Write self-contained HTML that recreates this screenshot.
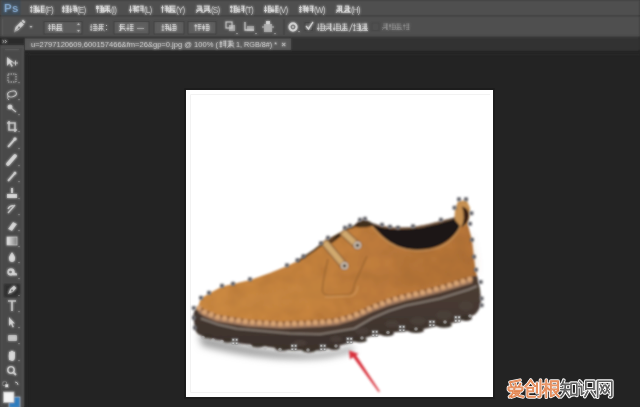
<!DOCTYPE html>
<html><head><meta charset="utf-8">
<style>
*{margin:0;padding:0}
html,body{width:640px;height:407px;overflow:hidden;background:#232323}
svg{position:absolute;left:0;top:0;display:block}
text{font-family:"Liberation Sans",sans-serif}
</style></head><body>
<svg width="640" height="407" viewBox="0 0 640 407">
<rect x="0" y="0" width="640" height="407" fill="#232323"/>
<defs><filter id="ui" x="0" y="0" width="100%" height="100%"><feGaussianBlur stdDeviation="1" result="bb"/><feComposite in="SourceGraphic" in2="bb" operator="arithmetic" k1="0" k2="0.45" k3="0.55" k4="0"/></filter></defs>
<g filter="url(#ui)">
<rect x="0" y="0" width="640" height="16" fill="#505050"/>
<rect x="0" y="15.5" width="640" height="1" fill="#3a3a3a"/>
<rect x="1.5" y="0" width="19" height="15.5" fill="#3f4c56"/>
<text x="4" y="12.3" font-size="11.5" font-weight="bold" fill="#8cb2da" letter-spacing="0.3">Ps</text>
<path d="M30.0 7.4H32.6M30.0 10.9H32.6M31.3 5.5V12.7M33.2 6.1H37.2M33.2 8.1H37.2M33.2 10.1H37.2M33.2 12.1H37.2M35.6 5.5V12.7M37.2 6.9V12.0M37.5 11.7H40.0M37.5 10.5H40.0M38.8 5.5V12.7M40.6 6.1H44.7M40.6 8.1H44.7M40.6 10.1H44.7M40.6 12.1H44.7M41.5 5.5V12.7" stroke="#e8e8e8" stroke-width="1.05" fill="none" opacity="1"/>
<text x="45" y="12.8" font-size="8.2" fill="#e6e6e6" opacity="0.95" text-anchor="start" letter-spacing="-0.9" font-weight="normal">(F)</text>
<path d="M62.0 8.8H64.8M62.0 11.1H64.8M62.0 7.3H64.8M63.4 5.5V12.7M65.3 6.1H69.2M65.3 8.1H69.2M65.3 10.1H69.2M65.3 12.1H69.2M67.6 5.5V12.7M69.5 9.3H72.0M69.5 11.3H72.0M70.7 5.5V12.7M72.6 6.1H76.7M72.6 8.1H76.7M72.6 10.1H76.7M74.9 5.5V12.7M76.7 6.9V12.0" stroke="#e8e8e8" stroke-width="1.05" fill="none" opacity="1"/>
<text x="77" y="12.8" font-size="8.2" fill="#e6e6e6" opacity="0.95" text-anchor="start" letter-spacing="-0.9" font-weight="normal">(E)</text>
<path d="M96.0 7.0H98.9M96.0 6.3H98.9M96.0 8.4H98.9M97.4 5.5V12.7M99.4 6.1H103.2M99.4 8.1H103.2M99.4 10.1H103.2M99.4 12.1H103.2M101.6 5.5V12.7M103.2 6.9V12.0M104.3 6.1H110.2M103.7 8.1H109.9M103.7 10.1H110.6M107.4 5.5V12.7M107.1 9.5L103.5 12.7M107.1 9.5L110.7 12.7" stroke="#e8e8e8" stroke-width="1.05" fill="none" opacity="1"/>
<text x="111" y="12.8" font-size="8.2" fill="#e6e6e6" opacity="0.95" text-anchor="start" letter-spacing="-0.9" font-weight="normal">(I)</text>
<path d="M129.0 10.0H131.9M129.0 10.1H131.9M130.5 5.5V12.7M132.5 6.1H136.2M132.5 8.1H136.2M132.5 10.1H136.2M134.7 5.5V12.7M136.2 6.9V12.0M136.5 6.4H139.6M136.5 6.9H139.6M136.5 10.2H139.6M138.0 5.5V12.7M140.1 6.1H143.7M140.1 8.1H143.7M140.1 10.1H143.7M143.0 5.5V12.7" stroke="#e8e8e8" stroke-width="1.05" fill="none" opacity="1"/>
<text x="144" y="12.8" font-size="8.2" fill="#e6e6e6" opacity="0.95" text-anchor="start" letter-spacing="-0.9" font-weight="normal">(L)</text>
<path d="M161.0 7.8H163.9M161.0 7.7H163.9M162.5 5.5V12.7M164.5 6.1H168.2M164.5 8.1H168.2M164.5 10.1H168.2M166.7 5.5V12.7M168.2 6.9V12.0M169.1 6.1H175.6M168.9 8.1H175.5M169.0 10.1H175.4M169.0 12.1H175.2M170.6 5.5V12.7M172.1 9.5L168.5 12.7M172.1 9.5L175.7 12.7" stroke="#e8e8e8" stroke-width="1.05" fill="none" opacity="1"/>
<text x="176" y="12.8" font-size="8.2" fill="#e6e6e6" opacity="0.95" text-anchor="start" letter-spacing="-0.9" font-weight="normal">(Y)</text>
<path d="M196.8 6.1H201.8M197.3 8.1H202.1M196.1 10.1H202.9M201.1 5.5V12.7M199.6 9.5L196.0 12.7M199.6 9.5L203.2 12.7M203.7 6.1H209.9M204.0 8.1H209.8M204.0 10.1H210.6M208.7 5.5V12.7M207.1 9.5L203.5 12.7M207.1 9.5L210.7 12.7" stroke="#e8e8e8" stroke-width="1.05" fill="none" opacity="1"/>
<text x="211" y="12.8" font-size="8.2" fill="#e6e6e6" opacity="0.95" text-anchor="start" letter-spacing="-0.9" font-weight="normal">(S)</text>
<path d="M230.0 7.5H232.7M230.0 6.3H232.7M230.0 11.1H232.7M231.3 5.5V12.7M233.3 6.1H237.2M233.3 8.1H237.2M233.3 10.1H237.2M233.3 12.1H237.2M234.6 5.5V12.7M237.2 6.9V12.0M237.5 11.7H240.5M237.5 9.7H240.5M239.0 5.5V12.7M241.1 6.1H244.7M241.1 8.1H244.7M241.1 10.1H244.7M243.5 5.5V12.7" stroke="#e8e8e8" stroke-width="1.05" fill="none" opacity="1"/>
<text x="245" y="12.8" font-size="8.2" fill="#e6e6e6" opacity="0.95" text-anchor="start" letter-spacing="-0.9" font-weight="normal">(T)</text>
<path d="M264.0 7.9H267.0M264.0 10.6H267.0M264.0 10.3H267.0M265.5 5.5V12.7M267.6 6.1H271.2M267.6 8.1H271.2M267.6 10.1H271.2M267.6 12.1H271.2M268.6 5.5V12.7M271.2 6.9V12.0M271.5 11.2H274.5M271.5 10.8H274.5M271.5 9.9H274.5M273.0 5.5V12.7M275.0 6.1H278.7M275.0 8.1H278.7M275.0 10.1H278.7M275.0 12.1H278.7M276.1 5.5V12.7" stroke="#e8e8e8" stroke-width="1.05" fill="none" opacity="1"/>
<text x="279" y="12.8" font-size="8.2" fill="#e6e6e6" opacity="0.95" text-anchor="start" letter-spacing="-0.9" font-weight="normal">(V)</text>
<path d="M299.0 7.6H301.9M299.0 11.7H301.9M299.0 9.8H301.9M300.4 5.5V12.7M302.5 6.1H306.2M302.5 8.1H306.2M302.5 10.1H306.2M304.3 5.5V12.7M306.2 6.9V12.0M306.5 8.1H308.9M306.5 10.1H308.9M307.7 5.5V12.7M309.5 6.1H313.7M309.5 8.1H313.7M309.5 10.1H313.7M312.5 5.5V12.7" stroke="#e8e8e8" stroke-width="1.05" fill="none" opacity="1"/>
<text x="314" y="12.8" font-size="8.2" fill="#e6e6e6" opacity="0.95" text-anchor="start" letter-spacing="-0.9" font-weight="normal">(W)</text>
<path d="M336.7 6.1H342.3M337.4 8.1H342.2M336.2 10.1H342.1M339.2 5.5V12.7M341.6 5.5V12.7M339.6 9.5L336.0 12.7M339.6 9.5L343.2 12.7M344.8 6.1H349.3M344.4 8.1H350.5M344.8 10.1H349.4M344.2 12.1H350.5M348.4 5.5V12.7M347.1 9.5L343.5 12.7M347.1 9.5L350.7 12.7" stroke="#e8e8e8" stroke-width="1.05" fill="none" opacity="1"/>
<text x="351" y="12.8" font-size="8.2" fill="#e6e6e6" opacity="0.95" text-anchor="start" letter-spacing="-0.9" font-weight="normal">(H)</text>
<rect x="0" y="16" width="640" height="21" fill="#4f4f4f"/>
<rect x="0" y="15.5" width="640" height="1" fill="#3e3e3e" />
<rect x="0" y="36.5" width="640" height="1.5" fill="#343434"/>
<rect x="2" y="19" width="1" height="16" fill="#5a5a5a"/>
<path d="M14 32.5 L15.5 27 L21 21.5 L24 24.5 L18.5 30 Z" fill="#d8d8d8"/><path d="M21.5 21 L23 19.5 L25.5 22 L24 23.5Z" fill="#d8d8d8"/>
<circle cx="19" cy="27.5" r="1.1" fill="#4a4a4a"/><path d="M14.5 32 L18.5 28" stroke="#4a4a4a" stroke-width="0.6"/>
<path d="M29.5 26 l3 0 l-1.5 2 z" fill="#cfcfcf"/>
<rect x="44" y="21.5" width="38" height="12.5" fill="#5c5c5c" stroke="#3a3a3a" stroke-width="1"/>
<path d="M48.0 26.1H51.0M48.0 28.4H51.0M49.5 24.0V31.0M51.6 24.6H55.0M51.6 26.5H55.0M51.6 28.5H55.0M52.5 24.0V31.0M55.0 25.4V30.3M56.7 24.6H61.9M56.6 26.5H61.3M55.9 28.5H62.2M56.8 30.4H61.3M57.5 24.0V31.0M61.1 24.0V31.0M59.1 27.9L55.6 31.0M59.1 27.9L62.6 31.0" stroke="#e4e4e4" stroke-width="0.9" fill="none" opacity="0.9"/>
<path d="M77 25 l1.5 -2 l1.5 2 z M77 30 l1.5 2 l1.5 -2 z" fill="#cfcfcf"/>
<path d="M90.0 29.8H92.3M90.0 26.9H92.3M91.2 24.0V31.0M92.9 24.6H97.0M92.9 26.5H97.0M92.9 28.5H97.0M92.9 30.4H97.0M95.1 24.0V31.0M97.0 25.4V30.3M98.7 24.6H104.1M98.8 26.5H103.8M97.8 28.5H103.4M99.7 24.0V31.0M101.7 24.0V31.0M101.1 27.9L97.6 31.0M101.1 27.9L104.6 31.0" stroke="#dcdcdc" stroke-width="0.9" fill="none" opacity="0.9"/>
<rect x="106" y="25" width="1" height="1" fill="#ddd"/><rect x="106" y="29" width="1" height="1" fill="#ddd"/>
<rect x="114" y="21.5" width="35" height="12.5" fill="#5e5e5e" stroke="#3c3c3c" stroke-width="1"/>
<path d="M120.0 24.6H124.9M119.2 26.5H124.7M120.0 28.5H125.4M120.5 24.0V31.0M120.8 24.0V31.0M122.5 27.9L119.0 31.0M122.5 27.9L126.0 31.0M126.6 28.7H129.3M126.6 28.6H129.3M128.0 24.0V31.0M129.9 24.6H133.6M129.9 26.5H133.6M129.9 28.5H133.6M129.9 30.4H133.6M131.1 24.0V31.0" stroke="#e4e4e4" stroke-width="0.9" fill="none" opacity="0.9"/>
<rect x="137" y="28" width="7" height="0.8" fill="#ddd" opacity="0.8"/>
<rect x="154" y="21.5" width="30" height="12.5" fill="#5e5e5e" stroke="#3c3c3c" stroke-width="1"/>
<path d="M161.5 30.1H164.3M161.5 26.8H164.3M162.9 24.0V31.0M164.9 24.6H168.5M164.9 26.5H168.5M164.9 28.5H168.5M166.6 24.0V31.0M168.5 25.4V30.3M169.1 28.2H171.7M169.1 30.0H171.7M169.1 29.7H171.7M170.4 24.0V31.0M172.2 24.6H176.1M172.2 26.5H176.1M172.2 28.5H176.1M172.2 30.4H176.1M173.9 24.0V31.0M176.1 25.4V30.3" stroke="#e4e4e4" stroke-width="0.9" fill="none" opacity="0.9"/>
<rect x="188" y="21.5" width="28" height="12.5" fill="#5e5e5e" stroke="#3c3c3c" stroke-width="1"/>
<path d="M194.5 25.7H197.2M194.5 26.0H197.2M195.8 24.0V31.0M197.7 24.6H201.5M197.7 26.5H201.5M197.7 28.5H201.5M199.0 24.0V31.0M202.1 28.6H205.0M202.1 26.8H205.0M202.1 27.0H205.0M203.6 24.0V31.0M205.6 24.6H209.1M205.6 26.5H209.1M205.6 28.5H209.1M205.6 30.4H209.1M207.0 24.0V31.0M209.1 25.4V30.3" stroke="#e4e4e4" stroke-width="0.9" fill="none" opacity="0.9"/>
<rect x="226" y="22" width="6" height="6" fill="none" stroke="#dadada" stroke-width="1.2"/><rect x="229" y="25" width="6" height="6" fill="#cfcfcf" opacity="0.7"/><path d="M236 33 l2 0 l-1 1.5z" fill="#ccc"/>
<path d="M245 22 v8 h9" fill="none" stroke="#dadada" stroke-width="1.3"/><rect x="247" y="26" width="7" height="5" fill="#cfcfcf" opacity="0.7"/><path d="M255 33 l2 0 l-1 1.5z" fill="#ccc"/>
<rect x="264" y="24" width="8" height="8" fill="#cfcfcf" opacity="0.75"/><rect x="266" y="21" width="4" height="3" fill="#dadada"/><path d="M262 27 h2 M272 27 h2" stroke="#ddd"/><path d="M274 33 l2 0 l-1 1.5z" fill="#ccc"/>
<rect x="283.5" y="19" width="1" height="16" fill="#3a3a3a"/>
<circle cx="293" cy="27" r="3.6" fill="none" stroke="#e4e4e4" stroke-width="2.2"/><circle cx="293" cy="27" r="1" fill="#e4e4e4"/><path d="M298 31 l2 0 l-1 1.5z" fill="#ccc"/>
<rect x="305" y="22.5" width="7.5" height="8" fill="#5a5a5a" stroke="#3a3a3a"/><path d="M306 26 l2.5 3 l4.5 -7" fill="none" stroke="#e8e8e8" stroke-width="1.4"/>
<path d="M317.0 28.4H319.5M317.0 28.9H319.5M318.3 23.5V31.0M320.1 24.1H324.5M320.1 26.2H324.5M320.1 28.3H324.5M320.1 30.4H324.5M321.2 23.5V31.0M324.5 25.0V30.2M326.4 24.1H331.5M325.1 26.2H331.5M325.3 28.3H331.1M330.9 23.5V31.0M330.5 23.5V31.0M328.8 27.6L325.0 31.0M328.8 27.6L332.5 31.0M333.0 28.4H335.4M333.0 29.2H335.4M334.2 23.5V31.0M336.0 24.1H340.5M336.0 26.2H340.5M336.0 28.3H340.5M336.0 30.4H340.5M336.9 23.5V31.0M340.5 25.0V30.2M342.1 24.1H347.2M342.4 26.2H347.4M342.0 28.3H347.7M341.4 30.4H347.3M344.4 23.5V31.0M344.8 27.6L341.0 31.0M344.8 27.6L348.5 31.0" stroke="#e4e4e4" stroke-width="0.95" fill="none" opacity="0.9"/>
<path d="M352.5 23.5 L349.5 31.5" stroke="#e4e4e4" stroke-width="0.9"/>
<path d="M353.0 25.7H355.8M353.0 30.2H355.8M354.4 23.5V31.0M356.4 24.1H360.5M356.4 26.2H360.5M356.4 28.3H360.5M356.4 30.4H360.5M359.5 23.5V31.0M360.5 25.0V30.2M361.4 24.1H367.0M362.0 26.2H367.1M362.0 28.3H367.8M360.5 30.4H366.9M365.0 23.5V31.0M366.2 23.5V31.0M364.2 27.6L360.5 31.0M364.2 27.6L368.0 31.0" stroke="#e4e4e4" stroke-width="0.95" fill="none" opacity="0.9"/>
<rect x="372" y="23" width="7" height="7.5" fill="#505050" stroke="#444"/>
<path d="M383.1 24.0H387.9M383.1 25.8H387.7M382.0 27.7H387.4M386.5 23.5V30.0M387.1 23.5V30.0M385.2 27.1L382.0 30.0M385.2 27.1L388.5 30.0M389.0 26.4H391.0M389.0 25.4H391.0M389.0 25.0H391.0M390.0 23.5V30.0M391.5 24.0H395.5M391.5 25.8H395.5M391.5 27.7H395.5M391.5 29.5H395.5M392.8 23.5V30.0M395.5 24.8V29.4M396.2 24.0H401.2M396.8 25.8H401.7M396.1 27.7H401.7M397.2 29.5H401.7M397.9 23.5V30.0M399.2 27.1L396.0 30.0M399.2 27.1L402.5 30.0M403.0 25.6H405.5M403.0 25.8H405.5M404.2 23.5V30.0M406.0 24.0H409.5M406.0 25.8H409.5M406.0 27.7H409.5M406.0 29.5H409.5M408.4 23.5V30.0" stroke="#9a9a9a" stroke-width="0.9" fill="none" opacity="0.75"/>
<rect x="27.5" y="52" width="0.8" height="355" fill="#2b2b2b"/><rect x="25" y="53.8" width="615" height="0.8" fill="#2b2b2b"/>
<rect x="0" y="38" width="640" height="12" fill="#333333"/>
<rect x="25" y="38.5" width="266" height="11.5" fill="#585858"/>
<rect x="0" y="50" width="640" height="1" fill="#2b2b2b"/>
<text x="31" y="46.8" font-size="8" fill="#e2e2e2" textLength="187" lengthAdjust="spacingAndGlyphs">u=2797120609,600157466&amp;fm=26&amp;gp=0.jpg @ 100% (</text>
<path d="M219.5 42.6H222.2M219.5 44.0H222.2M219.5 46.3H222.2M220.9 40.6V47.6M222.8 41.2H226.5M222.8 43.1H226.5M222.8 45.1H226.5M225.3 40.6V47.6M227.5 41.2H233.0M228.2 43.1H234.2M227.9 45.1H233.9M230.0 40.6V47.6M230.8 44.5L227.3 47.6M230.8 44.5L234.3 47.6" stroke="#e2e2e2" stroke-width="0.9" fill="none" opacity="0.95"/>
<text x="236" y="46.8" font-size="8" fill="#e2e2e2" textLength="41" lengthAdjust="spacingAndGlyphs">1, RGB/8#) *</text>
<path d="M282 42.8 l3.4 3.4 M285.4 42.8 l-3.4 3.4" stroke="#c8c8c8" stroke-width="1.1"/>
<rect x="0" y="38" width="25" height="369" fill="#4a4a4a"/>
<rect x="0" y="38" width="24" height="7" fill="#2a2a2a"/>
<path d="M2.5 40.2 l1.6 1.3 l-1.6 1.3 M5 40.2 l1.6 1.3 l-1.6 1.3" stroke="#d8d8d8" stroke-width="0.9" fill="none"/>
<rect x="1" y="47" width="22" height="360" fill="none" stroke="#565656" stroke-width="1"/>
<rect x="24" y="38" width="1" height="369" fill="#2e2e2e"/>
<rect x="5" y="49" width="14" height="1.2" fill="#5e5e5e"/>
<path d="M7 57 L7 66 L9.5 63.5 L11.5 67 L13 66 L11 62.5 L14 62.5 Z" fill="#d9d9d9"/><path d="M13 63 h5 M15.5 60.5 v5" stroke="#d9d9d9" stroke-width="1"/>
<rect x="8" y="74" width="8" height="8" fill="none" stroke="#d9d9d9" stroke-width="1" stroke-dasharray="1.5 1"/><path d="M18 82 l2 0 l-1 1.5 z" fill="#bbb" opacity="0.8"/>
<ellipse cx="12" cy="94" rx="4.5" ry="2.8" fill="none" stroke="#d9d9d9" stroke-width="1.2" transform="rotate(-15 12 94)"/><path d="M8 96 q-1 3 1 4" stroke="#d9d9d9" fill="none"/><path d="M18 99 l2 0 l-1 1.5 z" fill="#bbb" opacity="0.8"/>
<circle cx="10" cy="107" r="2.5" fill="#d9d9d9"/><path d="M11 108 L16 112" stroke="#d9d9d9" stroke-width="1.5"/><path d="M18 114 l2 0 l-1 1.5 z" fill="#bbb" opacity="0.8"/>
<path d="M9 121 V130 H17 M7 123 H15 V132" fill="none" stroke="#d9d9d9" stroke-width="1.6"/><path d="M18 131 l2 0 l-1 1.5 z" fill="#bbb" opacity="0.8"/>
<path d="M8 147 L15 139" stroke="#d9d9d9" stroke-width="2"/><circle cx="15" cy="139" r="1.8" fill="#d9d9d9"/><path d="M18 148 l2 0 l-1 1.5 z" fill="#bbb" opacity="0.8"/>
<path d="M8 164 L15 156" stroke="#d9d9d9" stroke-width="4" stroke-linecap="round"/><path d="M18 165 l2 0 l-1 1.5 z" fill="#bbb" opacity="0.8"/>
<path d="M8 181 L15 173" stroke="#d9d9d9" stroke-width="2"/><circle cx="15" cy="173" r="1.5" fill="#d9d9d9"/><path d="M18 181 l2 0 l-1 1.5 z" fill="#bbb" opacity="0.8"/>
<path d="M12 188 v5 M8 195 h8 v2 h-8z" stroke="#d9d9d9" stroke-width="2" fill="#d9d9d9"/><path d="M18 198 l2 0 l-1 1.5 z" fill="#bbb" opacity="0.8"/>
<path d="M8 213 L15 205 M8 209 q2 -4 6 -3" stroke="#d9d9d9" stroke-width="1.6" fill="none"/><path d="M18 214 l2 0 l-1 1.5 z" fill="#bbb" opacity="0.8"/>
<path d="M8 229 L13 222 L17 224 L12 231 Z" fill="#d9d9d9"/><path d="M18 230 l2 0 l-1 1.5 z" fill="#bbb" opacity="0.8"/>
<defs><linearGradient id="gr" x1="0" x2="1"><stop offset="0" stop-color="#eee"/><stop offset="1" stop-color="#777"/></linearGradient></defs>
<rect x="7" y="237" width="10" height="8" fill="url(#gr)" stroke="#d9d9d9" stroke-width="0.8"/><path d="M18 246 l2 0 l-1 1.5 z" fill="#bbb" opacity="0.8"/>
<path d="M12 252 q-4 5 -3 7 a3 3 0 0 0 6 0 q1 -2 -3 -7z" fill="#d9d9d9"/><path d="M18 262 l2 0 l-1 1.5 z" fill="#bbb" opacity="0.8"/>
<circle cx="11" cy="272" r="3.8" fill="#d9d9d9"/><path d="M13 272 l4 1.5 v2 l-4 0z" fill="#d9d9d9"/><circle cx="10.5" cy="272" r="1.3" fill="#333"/><path d="M18 278 l2 0 l-1 1.5 z" fill="#bbb" opacity="0.8"/>
<rect x="4" y="284" width="16" height="13" fill="#2f2f2f" stroke="#3a3a3a"/>
<path d="M8 294 L10 289 L14 285.5 L16.5 288 L13 292 Z" fill="#d9d9d9"/><circle cx="12" cy="290.5" r="0.9" fill="#2f2f2f"/><path d="M18 295 l2 0 l-1 1.5 z" fill="#bbb" opacity="0.8"/>
<path d="M8 301 h8 M12 301 v10" stroke="#d9d9d9" stroke-width="1.7"/><path d="M18 311 l2 0 l-1 1.5 z" fill="#bbb" opacity="0.8"/>
<path d="M9 317 L9 326 L11 324 L12.5 327.5 L14 327 L12.5 323.5 L15 323.5 Z" fill="#d9d9d9"/><path d="M18 327 l2 0 l-1 1.5 z" fill="#bbb" opacity="0.8"/>
<rect x="8" y="335" width="9" height="6" rx="1" fill="#d9d9d9" opacity="0.85"/><path d="M18 343 l2 0 l-1 1.5 z" fill="#bbb" opacity="0.8"/>
<path d="M9 360 q-1 -4 0 -7 v-1 q1 -1 1.5 0 v3 v-4 q1 -1 1.5 0 v4 v-4 q1 -1 1.5 0 v4 v-3 q1 -1 1.5 0 v5 q0 4 -3 4 z" fill="#d9d9d9"/><path d="M18 360 l2 0 l-1 1.5 z" fill="#bbb" opacity="0.8"/>
<circle cx="11" cy="370" r="3.2" fill="none" stroke="#d9d9d9" stroke-width="1.6"/><path d="M13.5 372.5 L16 375" stroke="#d9d9d9" stroke-width="2"/>
<rect x="3" y="382" width="3.5" height="3.5" fill="#111" stroke="#ddd" stroke-width="0.6"/><rect x="5" y="384" width="3.5" height="3.5" fill="#eee" stroke="#222" stroke-width="0.4"/>
<path d="M15 382 q3 0 3 3" stroke="#d9d9d9" stroke-width="1" fill="none"/>
<rect x="9" y="397" width="11" height="11" fill="#2a7bbd" stroke="#bbb" stroke-width="0.8"/>
<rect x="3.5" y="392" width="10.5" height="10.5" fill="#f4f4f4" stroke="#aaa" stroke-width="0.8"/>
</g>
<rect x="185" y="89" width="309" height="309" fill="none" stroke="#1c1c1c" stroke-width="1.6"/>
<rect x="186" y="90" width="307" height="307" fill="#ffffff"/>
<path d="M490 94.5 H190.5 V392.5 H300" fill="none" stroke="#f2f2f2" stroke-width="1"/>
<defs>
<filter id="b1" x="-20%" y="-20%" width="140%" height="140%"><feGaussianBlur stdDeviation="0.85"/></filter>
<filter id="b3" x="-20%" y="-50%" width="140%" height="200%"><feGaussianBlur stdDeviation="3.5"/></filter>
<filter id="tex" x="0" y="0" width="100%" height="100%"><feTurbulence type="fractalNoise" baseFrequency="0.07" numOctaves="2" seed="7" result="n"/><feColorMatrix in="n" type="matrix" values="1 0 0 0 0  1 0 0 0 0  1 0 0 0 0  0 0 0 0 1" result="g"/><feComposite in="g" in2="SourceGraphic" operator="in" result="gm"/><feBlend in="gm" in2="SourceGraphic" mode="overlay" result="bl"/><feComposite in="bl" in2="SourceGraphic" operator="arithmetic" k2="0.16" k3="0.84"/></filter>
<filter id="b4" x="-30%" y="-30%" width="160%" height="160%"><feGaussianBlur stdDeviation="6"/></filter>
<linearGradient id="leather" x1="200" y1="0" x2="478" y2="0" gradientUnits="userSpaceOnUse">
<stop offset="0" stop-color="#c6853f"/><stop offset="0.35" stop-color="#c2803c"/><stop offset="0.7" stop-color="#b9783a"/><stop offset="1" stop-color="#b07035"/>
</linearGradient>
<linearGradient id="soleg" x1="0" y1="290" x2="0" y2="350" gradientUnits="userSpaceOnUse">
<stop offset="0" stop-color="#4a3c33"/><stop offset="1" stop-color="#3b312c"/>
</linearGradient>
</defs>
<path d="M198 333 Q250 350 310 353 Q335 352 352 346 L354 351 Q335 358 310 359 Q260 361 202 346 Z" fill="#a0a0a0" filter="url(#b3)"/>
<g filter="url(#b1)">
<path d="M199 305 C195 308 193 313 193.5 318 L195 329 C196 333 199 335 202.5 336 L210 338.7 L240 343.4 L265 346.6 L290 350 L320 350.5 L345.8 344 L371.6 336 L392 332.5 L420 330 L432 327 L457 322 L475 314.5 C479 311 481 306 481 300 L480 289 L477 276 Z" fill="url(#soleg)"/>
<g fill="#3b312c"><ellipse cx="207" cy="336" rx="5" ry="2.2"/><ellipse cx="228" cy="340.5" rx="6" ry="2.2"/><ellipse cx="258" cy="345.2" rx="7" ry="2.2"/><ellipse cx="282" cy="348.6" rx="7" ry="2.2"/><ellipse cx="309" cy="350.2" rx="7" ry="2.2"/><ellipse cx="334" cy="347.5" rx="6" ry="2.4"/><ellipse cx="360" cy="340" rx="7" ry="2.6"/><ellipse cx="387" cy="333.6" rx="7" ry="2.6"/><ellipse cx="416" cy="330.5" rx="8" ry="2.6"/><ellipse cx="444" cy="325" rx="8" ry="2.8"/><ellipse cx="466" cy="318" rx="6" ry="3"/></g>
<g fill="#4d423c" opacity="0.75"><ellipse cx="300" cy="343" rx="7" ry="3"/><ellipse cx="336" cy="339" rx="6" ry="3"/><ellipse cx="362" cy="331" rx="7" ry="3.5"/><ellipse cx="392" cy="324" rx="7" ry="3.5"/><ellipse cx="418" cy="321" rx="8" ry="4"/><ellipse cx="444" cy="315" rx="8" ry="4.5"/><ellipse cx="466" cy="306" rx="7" ry="5"/></g>
<path d="M199.0 306.0 205.0 310.0 217.0 315.0 248.0 320.0 282.0 322.0 320.0 320.4 337.0 318.5 354.4 313.5 371.6 305.5 388.8 299.0 406.0 294.0 420.0 291.0 440.0 286.0 472.0 276.5 477.0 275.5 L478 283 L477.0 286.0 469.0 289.5 440.0 298.5 420.0 302.8 406.0 305.5 388.8 311.0 371.6 318.5 354.4 328.5 320.0 334.2 290.0 333.5 237.0 328.8 218.0 324.5 201.0 318.5 Z" fill="#4c3a30"/>
<polyline points="201.0 318.5 218.0 324.5 237.0 328.8 290.0 333.5 320.0 334.2 354.4 328.5 371.6 318.5 388.8 311.0 406.0 305.5 420.0 302.8 440.0 298.5 469.0 289.5 477.0 286.0" fill="none" stroke="#8e847c" stroke-width="1.6"/>
<polyline points="199.0 311.0 205.0 315.0 217.0 320.0 248.0 325.0 282.0 327.0 320.0 325.4 337.0 323.5 354.4 318.5 371.6 310.5 388.8 304.0 406.0 299.0 420.0 296.0 440.0 291.0 472.0 281.5" fill="none" stroke="#8a6850" stroke-width="3.4"/>
<polyline points="199.0 307.8 205.0 311.8 217.0 316.8 248.0 321.8 282.0 323.8 320.0 322.2 337.0 320.3 354.4 315.3 371.6 307.3 388.8 300.8 406.0 295.8 420.0 292.8 440.0 287.8 472.0 278.3" fill="none" stroke="#8a5a38" stroke-width="3.0"/>
<path d="M199 308 C198.5 303 200 299.5 203 297 L209 293.5 L222 286.5 L233 284 L250 280 L270 273 L287 266 L297.5 261 L303.5 257 L314 250 L321 244.5 L327.5 239.5 L343 231 L346 228.4 L354 226 L359 222 L363 219.5 L367 221 L371 223 L377 224.8 L394 228.2 L411.5 227.3 L428.7 224 L446 219.6 L454.5 218 L455 209 L458.5 201 L466.5 200.5 L469.5 208 L468.5 217 L468 225 L472 240 L474 257 L475.5 270 L477 275.5 L472.0 276.5 L440.0 286.0 L420.0 291.0 L406.0 294.0 L388.8 299.0 L371.6 305.5 L354.4 313.5 L337.0 318.5 L320.0 320.4 L282.0 322.0 L248.0 320.0 L217.0 315.0 L205.0 310.0 L199.0 306.0 Z" fill="url(#leather)" filter="url(#tex)"/>
<path d="M230 300 Q280 285 330 275 L330 300 Q280 312 230 312 Z" fill="#c88a45" opacity="0.35" filter="url(#b4)"/>
<path d="M390 255 Q430 248 468 238 L474 272 Q430 285 390 295 Z" fill="#a86a32" opacity="0.3" filter="url(#b4)"/>
<polyline points="199.0 310.6 205.0 314.6 217.0 319.6 248.0 324.6 282.0 326.6 320.0 325.0 337.0 323.1 354.4 318.1 371.6 310.1 388.8 303.6 406.0 298.6 420.0 295.6 440.0 290.6 472.0 281.1" fill="none" stroke="#a47c62" stroke-width="3"/>
<g fill="#d6a272"><ellipse cx="199.0" cy="308.0" rx="3" ry="2.5"/><ellipse cx="204.8" cy="311.9" rx="3" ry="2.5"/><ellipse cx="211.3" cy="314.6" rx="3" ry="2.5"/><ellipse cx="217.8" cy="317.1" rx="3" ry="2.5"/><ellipse cx="224.7" cy="318.2" rx="3" ry="2.5"/><ellipse cx="231.6" cy="319.4" rx="3" ry="2.5"/><ellipse cx="238.5" cy="320.5" rx="3" ry="2.5"/><ellipse cx="245.4" cy="321.6" rx="3" ry="2.5"/><ellipse cx="252.4" cy="322.3" rx="3" ry="2.5"/><ellipse cx="259.4" cy="322.7" rx="3" ry="2.5"/><ellipse cx="266.4" cy="323.1" rx="3" ry="2.5"/><ellipse cx="273.3" cy="323.5" rx="3" ry="2.5"/><ellipse cx="280.3" cy="323.9" rx="3" ry="2.5"/><ellipse cx="287.3" cy="323.8" rx="3" ry="2.5"/><ellipse cx="294.3" cy="323.5" rx="3" ry="2.5"/><ellipse cx="301.3" cy="323.2" rx="3" ry="2.5"/><ellipse cx="308.3" cy="322.9" rx="3" ry="2.5"/><ellipse cx="315.3" cy="322.6" rx="3" ry="2.5"/><ellipse cx="322.3" cy="322.1" rx="3" ry="2.5"/><ellipse cx="329.2" cy="321.4" rx="3" ry="2.5"/><ellipse cx="336.2" cy="320.6" rx="3" ry="2.5"/><ellipse cx="342.9" cy="318.8" rx="3" ry="2.5"/><ellipse cx="349.7" cy="316.9" rx="3" ry="2.5"/><ellipse cx="356.3" cy="314.6" rx="3" ry="2.5"/><ellipse cx="362.6" cy="311.7" rx="3" ry="2.5"/><ellipse cx="369.0" cy="308.7" rx="3" ry="2.5"/><ellipse cx="375.5" cy="306.0" rx="3" ry="2.5"/><ellipse cx="382.0" cy="303.6" rx="3" ry="2.5"/><ellipse cx="388.5" cy="301.1" rx="3" ry="2.5"/><ellipse cx="395.3" cy="299.1" rx="3" ry="2.5"/><ellipse cx="402.0" cy="297.2" rx="3" ry="2.5"/><ellipse cx="408.8" cy="295.4" rx="3" ry="2.5"/><ellipse cx="415.6" cy="293.9" rx="3" ry="2.5"/><ellipse cx="422.4" cy="292.4" rx="3" ry="2.5"/><ellipse cx="429.2" cy="290.7" rx="3" ry="2.5"/><ellipse cx="436.0" cy="289.0" rx="3" ry="2.5"/><ellipse cx="442.8" cy="287.2" rx="3" ry="2.5"/><ellipse cx="449.5" cy="285.2" rx="3" ry="2.5"/><ellipse cx="456.2" cy="283.2" rx="3" ry="2.5"/><ellipse cx="462.9" cy="281.2" rx="3" ry="2.5"/><ellipse cx="469.6" cy="279.2" rx="3" ry="2.5"/></g>
<g fill="#82522e"><circle cx="201.9" cy="308.5" r="1.1"/><circle cx="208.0" cy="311.8" r="1.1"/><circle cx="214.5" cy="314.5" r="1.1"/><circle cx="221.2" cy="316.3" r="1.1"/><circle cx="228.1" cy="317.4" r="1.1"/><circle cx="235.1" cy="318.5" r="1.1"/><circle cx="242.0" cy="319.6" r="1.1"/><circle cx="248.9" cy="320.5" r="1.1"/><circle cx="255.9" cy="321.1" r="1.1"/><circle cx="262.9" cy="321.5" r="1.1"/><circle cx="269.9" cy="321.9" r="1.1"/><circle cx="276.8" cy="322.3" r="1.1"/><circle cx="283.8" cy="322.4" r="1.1"/><circle cx="290.8" cy="322.2" r="1.1"/><circle cx="297.8" cy="321.9" r="1.1"/><circle cx="304.8" cy="321.6" r="1.1"/><circle cx="311.8" cy="321.3" r="1.1"/><circle cx="318.8" cy="321.0" r="1.1"/><circle cx="325.8" cy="320.4" r="1.1"/><circle cx="332.7" cy="319.6" r="1.1"/><circle cx="339.6" cy="318.3" r="1.1"/><circle cx="346.3" cy="316.4" r="1.1"/><circle cx="353.0" cy="314.3" r="1.1"/><circle cx="359.5" cy="311.7" r="1.1"/><circle cx="365.8" cy="308.8" r="1.1"/><circle cx="372.2" cy="306.0" r="1.1"/><circle cx="378.7" cy="303.4" r="1.1"/><circle cx="385.3" cy="300.9" r="1.1"/><circle cx="391.9" cy="298.7" r="1.1"/><circle cx="398.6" cy="296.7" r="1.1"/><circle cx="405.4" cy="294.9" r="1.1"/><circle cx="412.2" cy="293.3" r="1.1"/><circle cx="419.0" cy="291.8" r="1.1"/><circle cx="425.8" cy="290.1" r="1.1"/><circle cx="432.6" cy="288.4" r="1.1"/><circle cx="439.4" cy="286.7" r="1.1"/><circle cx="446.1" cy="284.8" r="1.1"/><circle cx="452.8" cy="282.8" r="1.1"/><circle cx="459.5" cy="280.8" r="1.1"/><circle cx="466.3" cy="278.8" r="1.1"/></g>
<path d="M370 223.5 L377 225.8 C385 228.5 395 229.5 411.5 228.6 C425 227.5 440 223 455 218.5 L460 217.5 C461 224 460 229 457.2 231 C452 238 443 246 430 248.5 C420 250.5 408 250 398 246.4 C390 243 385 238.5 382.8 236.6 Z" fill="#1c1817"/>
<path d="M370.5 224.5 C376 231 380 236 383 238 C390 244.5 400 249.5 415 250.8 C428 251.5 443 248 451 240 C456 235 459 231 461 224 L461.5 218" fill="none" stroke="#c49058" stroke-width="1.1"/>
<path d="M371 223 L377 225 C385 227.5 395 228.5 411.5 227.6 C425 226.5 440 222 455 217.6" fill="none" stroke="#6a5a50" stroke-width="1.3"/>
<path d="M353 226.5 L358.5 221.5 L364 219.5 L370 221.5 L374 225.5 L367 227.2 L359 227.5 Z" fill="#2c201a" opacity="0.85"/>
<path d="M455 220 L455 209 L458.5 201 L466.5 200.5 L470 208 L469.5 217 L466 226 L460 226 Z" fill="#c69051"/>
<path d="M462 206.5 Q469.5 208.5 469 216 Q468.5 224 461 227.5 Q466 218 462 206.5 Z" fill="#3a2214"/>
<path d="M297.5 261.5 L303.5 257.5 L314 250.5 L321 245 L327.5 240.5 L343 232 L346 229 L354 226.6 L359 222.8" stroke="#3a2818" stroke-width="1.6" fill="none" stroke-linejoin="round"/>
<path d="M322 244.5 L332 241.5 L343 233" stroke="#2e2018" stroke-width="2.4" fill="none"/>
<path d="M321.2 243.8 L341.7 268.3 L347.3 263.7 L326.8 239.2 Z M340.0 234.1 L355.5 248.6 L360.5 243.4 L345.0 228.9 Z" fill="#cba26a" stroke="#8a6038" stroke-width="1.1" stroke-linejoin="round"/>
<path d="M324.2 244.1 L341.7 265.1 L344.3 262.9 L326.8 241.9 Z M342.8 234.8 L354.8 245.8 L357.2 243.2 L345.2 232.2 Z" fill="#d2ac72" opacity="0.8"/>
<circle cx="344.5" cy="265.8" r="4.2" fill="#7a6050"/><circle cx="344.5" cy="265.8" r="3.5" fill="#ddd0c0"/><circle cx="344.5" cy="265.8" r="1.9" fill="#2e221a"/>
<circle cx="357.5" cy="245.3" r="4.2" fill="#7a6050"/><circle cx="357.5" cy="245.3" r="3.5" fill="#ddd0c0"/><circle cx="357.5" cy="245.3" r="1.9" fill="#2e221a"/>
<path d="M328 259 C325 272 322 284 322.5 291 C323 294.5 326 295.5 330 295.5 L349 294.5 C352 294 353.5 290 354.5 284 L367 256" fill="none" stroke="#94602e" stroke-width="1.2" opacity="0.9"/>
<path d="M325 296.8 L350 296.2 C354 296 357 292 358 286" fill="none" stroke="#d8a060" stroke-width="1.2" opacity="0.8"/>
</g>
<g filter="url(#b1)"><g fill="#66666c"><rect x="199.0" y="295.7" width="4" height="4" rx="1"/><rect x="207.0" y="290.7" width="4" height="4" rx="1"/><rect x="220.0" y="283.7" width="4" height="4" rx="1"/><rect x="231.0" y="281.7" width="4" height="4" rx="1"/><rect x="248.0" y="277.2" width="4" height="4" rx="1"/><rect x="285.0" y="263.2" width="4" height="4" rx="1"/><rect x="295.5" y="258.2" width="4" height="4" rx="1"/><rect x="301.5" y="254.2" width="4" height="4" rx="1"/><rect x="319.0" y="241.2" width="4" height="4" rx="1"/><rect x="326.0" y="235.7" width="4" height="4" rx="1"/><rect x="343.0" y="225.7" width="4" height="4" rx="1"/><rect x="348.0" y="223.7" width="4" height="4" rx="1"/><rect x="358.0" y="217.7" width="4" height="4" rx="1"/><rect x="363.0" y="216.7" width="4" height="4" rx="1"/><rect x="380.0" y="222.7" width="4" height="4" rx="1"/><rect x="388.0" y="224.7" width="4" height="4" rx="1"/><rect x="396.0" y="225.7" width="4" height="4" rx="1"/><rect x="411.0" y="224.2" width="4" height="4" rx="1"/><rect x="439.0" y="217.7" width="4" height="4" rx="1"/><rect x="452.5" y="205.7" width="4" height="4" rx="1"/><rect x="457.0" y="197.2" width="4" height="4" rx="1"/><rect x="464.0" y="197.2" width="4" height="4" rx="1"/><rect x="469.4" y="211.2" width="4" height="4" rx="1"/><rect x="468.0" y="221.7" width="4" height="4" rx="1"/><rect x="470.0" y="237.7" width="4" height="4" rx="1"/><rect x="472.0" y="254.7" width="4" height="4" rx="1"/><rect x="474.0" y="267.7" width="4" height="4" rx="1"/><rect x="478.7" y="280.0" width="4" height="4" rx="1"/><rect x="479.6" y="296.4" width="4" height="4" rx="1"/><rect x="479.6" y="303.2" width="4" height="4" rx="1"/><rect x="191.8" y="306.0" width="4" height="4" rx="1"/><rect x="192.0" y="315.7" width="4" height="4" rx="1"/><rect x="193.0" y="325.7" width="4" height="4" rx="1"/></g></g><g fill="#b8b8b8" opacity="0.8" filter="url(#b05)"><circle cx="203" cy="337.5" r="1.8"/><circle cx="213" cy="340" r="1.8"/><circle cx="222" cy="341.5" r="1.8"/><circle cx="250" cy="346.5" r="1.8"/><circle cx="265" cy="348.5" r="1.8"/><circle cx="280" cy="349.5" r="1.8"/><circle cx="308" cy="350" r="1.8"/><circle cx="336" cy="346" r="1.8"/><circle cx="362" cy="338" r="1.8"/><circle cx="388" cy="332.5" r="1.8"/><circle cx="416" cy="329" r="1.8"/><circle cx="445" cy="322" r="1.8"/><circle cx="470" cy="316" r="1.8"/></g><g fill="#eeeeee" stroke="#5a5a5a" stroke-width="0.6" filter="url(#b05)"><rect x="232.0" y="338.5" width="2.5" height="2.5"/><rect x="232.0" y="342.1" width="2.5" height="2.5"/><rect x="235.4" y="338.5" width="2.5" height="2.5"/><rect x="235.4" y="342.1" width="2.5" height="2.5"/><rect x="291.0" y="344.5" width="2.5" height="2.5"/><rect x="291.0" y="348.1" width="2.5" height="2.5"/><rect x="294.4" y="344.5" width="2.5" height="2.5"/><rect x="294.4" y="348.1" width="2.5" height="2.5"/><rect x="320.0" y="344.5" width="2.5" height="2.5"/><rect x="320.0" y="348.1" width="2.5" height="2.5"/><rect x="323.4" y="344.5" width="2.5" height="2.5"/><rect x="323.4" y="348.1" width="2.5" height="2.5"/><rect x="346.5" y="337.5" width="2.5" height="2.5"/><rect x="346.5" y="341.1" width="2.5" height="2.5"/><rect x="349.9" y="337.5" width="2.5" height="2.5"/><rect x="349.9" y="341.1" width="2.5" height="2.5"/><rect x="372.0" y="330.5" width="2.5" height="2.5"/><rect x="372.0" y="334.1" width="2.5" height="2.5"/><rect x="375.4" y="330.5" width="2.5" height="2.5"/><rect x="375.4" y="334.1" width="2.5" height="2.5"/><rect x="399.0" y="325.5" width="2.5" height="2.5"/><rect x="399.0" y="329.1" width="2.5" height="2.5"/><rect x="402.4" y="325.5" width="2.5" height="2.5"/><rect x="402.4" y="329.1" width="2.5" height="2.5"/><rect x="429.0" y="320.5" width="2.5" height="2.5"/><rect x="429.0" y="324.1" width="2.5" height="2.5"/><rect x="432.4" y="320.5" width="2.5" height="2.5"/><rect x="432.4" y="324.1" width="2.5" height="2.5"/><rect x="454.5" y="316.0" width="2.5" height="2.5"/><rect x="454.5" y="319.6" width="2.5" height="2.5"/><rect x="457.9" y="316.0" width="2.5" height="2.5"/><rect x="457.9" y="319.6" width="2.5" height="2.5"/></g><defs><filter id="b05" x="-10%" y="-30%" width="120%" height="160%"><feGaussianBlur stdDeviation="1" result="bb"/><feComposite in="SourceGraphic" in2="bb" operator="arithmetic" k2="0.4" k3="0.6"/></filter></defs>
<path d="M349 350.5 L350 359.5 L353 357 L378.5 392 L380 391.5 L356 355 L359 354 Z" fill="#d8323c" filter="url(#b1)"/>
<defs><filter id="b1w" x="-10%" y="-30%" width="120%" height="160%"><feGaussianBlur stdDeviation="0.45"/></filter></defs>
<defs><linearGradient id="wmg" x1="0" y1="379" x2="0" y2="397" gradientUnits="userSpaceOnUse"><stop offset="0" stop-color="#ec8e55"/><stop offset="1" stop-color="#db6f35"/></linearGradient></defs>
<g filter="url(#b1w)">
<g fill="none" stroke="#fbfbfb" stroke-width="3.7" stroke-linecap="round" stroke-linejoin="round"><path transform="translate(506.5 379.2) scale(1.0)" d="M13.5 1 L3.5 3 M4 5 L5.2 7.2 M8.8 4.5 L9.3 7 M14 4.5 L12.5 7 M2 10.5 V8.2 H16 V10.5 M3 11.6 H15 M8 9 Q7.2 14.5 3 17.6 M6.2 13.2 H13 Q11 16.5 5 17.8 M8 14 Q11 17 16.5 17.6"/><path transform="translate(524.2 379.2) scale(1.0)" d="M6.5 1 Q4.5 5 1 7.5 M6.5 1 Q8.5 5 11 7 M3 8.6 H9 V12.2 H3.2 M3.2 8.6 V16.5 Q3.2 17.6 5 17.6 H10.8 M12.8 4 V13.5 M16.3 1 V16.5 Q16.3 18 14 17.6"/><path transform="translate(541.8 379.2) scale(1.0)" d="M1 5.2 H7.8 M4.5 1 V18 M4.5 6 Q3.2 11 1 13.5 M5 8 L7.2 10.5 M9 2 H16.3 V10.2 H9 M9 6.2 H16.3 M9 2 V17.2 L12.2 15.6 M11.6 10.4 Q14 15 17.2 17.6 M16.6 11.2 L14.2 13.2"/><path transform="translate(559.8 379.2) scale(1.0)" d="M4 1 Q3.2 4 1.2 6 M2.6 5.2 H9.4 M1 10.4 H9.8 M5.6 5.2 Q5.6 13.5 1 17.6 M6.2 12.2 L9.6 17.2 M11.2 4 V16.2 M11.2 4 H17 V16.2 M11.2 15.4 H17"/><path transform="translate(577.6 379.2) scale(1.0)" d="M2 1.8 L4.2 4 M1 7.2 H4 V15.2 L6.2 13.6 M8.2 2 V10.2 M8.2 2 H16.4 V10.2 M8.2 9.6 H16.4 M10.2 12 L7.2 17.4 M13.6 12 L17.2 17.4"/><path transform="translate(595.6 379.2) scale(1.0)" d="M2 18 V2 H16.2 V16.2 Q16.2 18 14 17.6 M5 6 L8.6 13.6 M8.6 6 L5 13.6 M10 6 L13.6 13.6 M13.6 6 L10 13.6"/></g>
<g fill="none" stroke="#e07840" stroke-width="1.9" stroke-linecap="round" stroke-linejoin="round"><path transform="translate(506.5 379.2) scale(1.0)" d="M13.5 1 L3.5 3 M4 5 L5.2 7.2 M8.8 4.5 L9.3 7 M14 4.5 L12.5 7 M2 10.5 V8.2 H16 V10.5 M3 11.6 H15 M8 9 Q7.2 14.5 3 17.6 M6.2 13.2 H13 Q11 16.5 5 17.8 M8 14 Q11 17 16.5 17.6"/><path transform="translate(524.2 379.2) scale(1.0)" d="M6.5 1 Q4.5 5 1 7.5 M6.5 1 Q8.5 5 11 7 M3 8.6 H9 V12.2 H3.2 M3.2 8.6 V16.5 Q3.2 17.6 5 17.6 H10.8 M12.8 4 V13.5 M16.3 1 V16.5 Q16.3 18 14 17.6"/><path transform="translate(541.8 379.2) scale(1.0)" d="M1 5.2 H7.8 M4.5 1 V18 M4.5 6 Q3.2 11 1 13.5 M5 8 L7.2 10.5 M9 2 H16.3 V10.2 H9 M9 6.2 H16.3 M9 2 V17.2 L12.2 15.6 M11.6 10.4 Q14 15 17.2 17.6 M16.6 11.2 L14.2 13.2"/></g>
<g fill="none" stroke="#fff1e0" stroke-width="0.6" opacity="0.45" stroke-linecap="butt"><path transform="translate(506.5 379.2) scale(1.0)" d="M13.5 1 L3.5 3 M4 5 L5.2 7.2 M8.8 4.5 L9.3 7 M14 4.5 L12.5 7 M2 10.5 V8.2 H16 V10.5 M3 11.6 H15 M8 9 Q7.2 14.5 3 17.6 M6.2 13.2 H13 Q11 16.5 5 17.8 M8 14 Q11 17 16.5 17.6"/><path transform="translate(524.2 379.2) scale(1.0)" d="M6.5 1 Q4.5 5 1 7.5 M6.5 1 Q8.5 5 11 7 M3 8.6 H9 V12.2 H3.2 M3.2 8.6 V16.5 Q3.2 17.6 5 17.6 H10.8 M12.8 4 V13.5 M16.3 1 V16.5 Q16.3 18 14 17.6"/><path transform="translate(541.8 379.2) scale(1.0)" d="M1 5.2 H7.8 M4.5 1 V18 M4.5 6 Q3.2 11 1 13.5 M5 8 L7.2 10.5 M9 2 H16.3 V10.2 H9 M9 6.2 H16.3 M9 2 V17.2 L12.2 15.6 M11.6 10.4 Q14 15 17.2 17.6 M16.6 11.2 L14.2 13.2"/></g>
<g fill="none" stroke="#4a4a4a" stroke-width="1.6" stroke-linecap="round" stroke-linejoin="round"><path transform="translate(559.8 379.2) scale(1.0)" d="M4 1 Q3.2 4 1.2 6 M2.6 5.2 H9.4 M1 10.4 H9.8 M5.6 5.2 Q5.6 13.5 1 17.6 M6.2 12.2 L9.6 17.2 M11.2 4 V16.2 M11.2 4 H17 V16.2 M11.2 15.4 H17"/><path transform="translate(577.6 379.2) scale(1.0)" d="M2 1.8 L4.2 4 M1 7.2 H4 V15.2 L6.2 13.6 M8.2 2 V10.2 M8.2 2 H16.4 V10.2 M8.2 9.6 H16.4 M10.2 12 L7.2 17.4 M13.6 12 L17.2 17.4"/><path transform="translate(595.6 379.2) scale(1.0)" d="M2 18 V2 H16.2 V16.2 Q16.2 18 14 17.6 M5 6 L8.6 13.6 M8.6 6 L5 13.6 M10 6 L13.6 13.6 M13.6 6 L10 13.6"/></g>
<g fill="none" stroke="#cfcfcf" stroke-width="0.5" opacity="0.35" stroke-linecap="butt"><path transform="translate(559.8 379.2) scale(1.0)" d="M4 1 Q3.2 4 1.2 6 M2.6 5.2 H9.4 M1 10.4 H9.8 M5.6 5.2 Q5.6 13.5 1 17.6 M6.2 12.2 L9.6 17.2 M11.2 4 V16.2 M11.2 4 H17 V16.2 M11.2 15.4 H17"/><path transform="translate(577.6 379.2) scale(1.0)" d="M2 1.8 L4.2 4 M1 7.2 H4 V15.2 L6.2 13.6 M8.2 2 V10.2 M8.2 2 H16.4 V10.2 M8.2 9.6 H16.4 M10.2 12 L7.2 17.4 M13.6 12 L17.2 17.4"/><path transform="translate(595.6 379.2) scale(1.0)" d="M2 18 V2 H16.2 V16.2 Q16.2 18 14 17.6 M5 6 L8.6 13.6 M8.6 6 L5 13.6 M10 6 L13.6 13.6 M13.6 6 L10 13.6"/></g>
</g>
</svg>
</body></html>
